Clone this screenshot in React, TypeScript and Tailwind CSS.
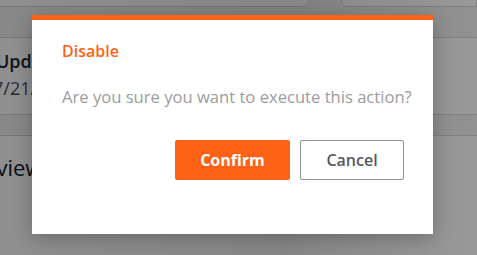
import React from 'react';

const font = { fontFamily: '"Open Sans", "Noto Sans", sans-serif' };

const Backdrop = () => (
  <div className="h-full w-full bg-[#f3f3f3]">
    {/* top row of cards, mostly scrolled off */}
    <div className="flex gap-8 -mt-2">
      <div className="ml-[-40px] h-[15px] w-[349px] rounded-b-md border border-[#d8d8d8] bg-white"></div>
      <div className="h-[15px] flex-1 rounded-bl-md border border-[#d8d8d8] bg-white"></div>
    </div>
    <div className="mt-[30px] ml-[-120px] w-[700px] border-y border-[#d8d8d8] bg-white pl-[120px] pt-[11px] h-[78px]">
      <div className="ml-[-4px] text-[18px] font-semibold leading-6 text-[#1d2633]">Update</div>
      <div className="ml-[-7px] mt-[3px] text-[18px] leading-6 text-[#4b4f56]">7/21/2023</div>
    </div>
    <div className="mt-[20px] ml-[-120px] w-[700px] border-t border-[#d8d8d8] bg-white pl-[120px] pt-[17px] h-[130px]">
      <div className="ml-[-53px] text-[22px] font-medium leading-7 text-[#111827]">Overview</div>
    </div>
  </div>
);

export default function App() {
  return (
    <div className="relative h-[255px] w-[477px] overflow-hidden" style={font}>
      <Backdrop />
      <div className="absolute inset-0 bg-[linear-gradient(90deg,rgba(0,0,0,0.44)_0%,rgba(0,0,0,0.47)_60%,rgba(0,0,0,0.4)_100%)]">
        <div className="ml-[32px] mt-[15px] w-[401px] border-t-[5px] border-[#fd6216] bg-white shadow-[0_4px_18px_rgba(0,0,0,0.25)]">
          <div className="px-[30px] pt-[19px] pb-[54px]">
            <h2 className="text-base font-semibold leading-6 text-[#fd6216]">Disable</h2>
            <p className="mt-[22px] whitespace-nowrap text-[16.6px] leading-6 text-[#9b9ca0]">
              Are you sure you want to execute this action?
            </p>
            <div className="mt-[31px] flex justify-end gap-[10px]">
              <button className="h-[40px] w-[115px] rounded-[2px] bg-[#fd6216] text-base font-bold text-white">
                Confirm
              </button>
              <button className="mr-[-1px] h-[40px] w-[104px] rounded-[2px] border border-[#8f9196] bg-white text-base font-semibold text-[#555960]">
                Cancel
              </button>
            </div>
          </div>
        </div>
      </div>
    </div>
  );
}
